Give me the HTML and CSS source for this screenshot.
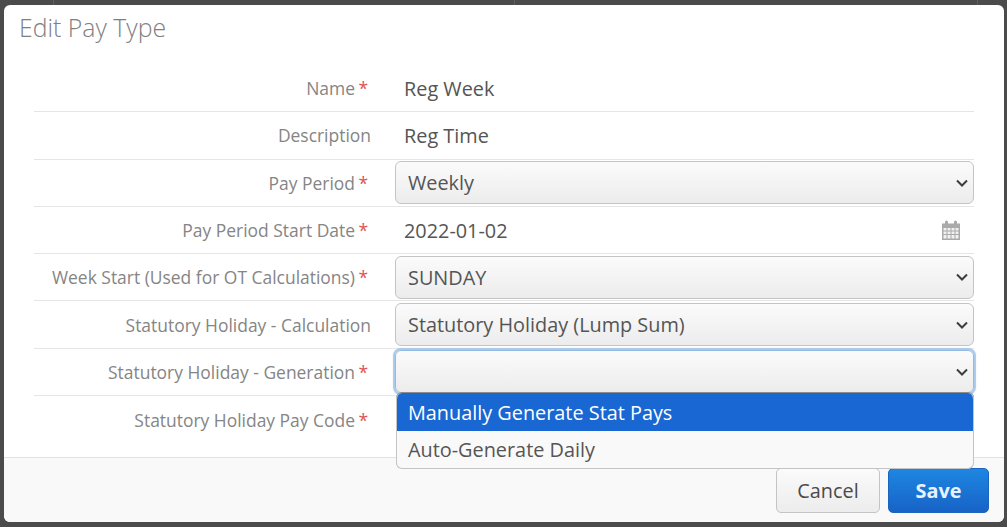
FILE: index.html
```html
<!DOCTYPE html>
<html lang="en">
<head>
    <meta charset="UTF-8">
    <title>Edit Pay Type</title>
    <link rel="stylesheet" href="styles.css">
</head>
<body>

    <div class="modal">
        <h1 class="modal-title">Edit Pay Type</h1>

        <div class="modal-body">
            <div class="row">
                <div class="label">Name<span class="req">*</span></div>
                <div class="value">Reg Week</div>
            </div>
            <div class="row">
                <div class="label">Description</div>
                <div class="value">Reg Time</div>
            </div>
            <div class="row">
                <div class="label">Pay Period<span class="req">*</span></div>
                <div class="select">Weekly
                    <svg class="chevron" viewBox="0 0 12 8"><path d="M1 1.5l5 5 5-5" /></svg>
                </div>
            </div>
            <div class="row">
                <div class="label">Pay Period Start Date<span class="req">*</span></div>
                <div class="value date">2022-01-02
                    <svg class="calendar" viewBox="0 0 20 20">
                        <path d="M1 3.5h3V2a1.5 1.5 0 0 1 3 0v1.500h6V2a1.500 1.500 0 0 1 3 0v1.500h3V20H1z" fill="#aaa" />
                        <path d="M2.500 8h3v2.500h-3zM6.500 8h3v2.500h-3zM10.500 8h3v2.500h-3zM14.500 8h3v2.500h-3zM2.500 11.500h3V14h-3zM6.500 11.500h3V14h-3zM10.500 11.500h3V14h-3zM14.500 11.500h3V14h-3zM2.500 15h3v3.500h-3zM6.500 15h3v3.500h-3zM10.500 15h3v3.500h-3zM14.500 15h3v3.500h-3z" fill="#f1f1f1" />
                    </svg>
                </div>
            </div>
            <div class="row">
                <div class="label">Week Start (Used for OT Calculations)<span class="req">*</span></div>
                <div class="select">SUNDAY
                    <svg class="chevron" viewBox="0 0 12 8"><path d="M1 1.5l5 5 5-5" /></svg>
                </div>
            </div>
            <div class="row">
                <div class="label">Statutory Holiday - Calculation</div>
                <div class="select">Statutory Holiday (Lump Sum)
                    <svg class="chevron" viewBox="0 0 12 8"><path d="M1 1.5l5 5 5-5" /></svg>
                </div>
            </div>
            <div class="row">
                <div class="label">Statutory Holiday - Generation<span class="req">*</span></div>
                <div class="select focused">
                    <svg class="chevron" viewBox="0 0 12 8"><path d="M1 1.5l5 5 5-5" /></svg>
                    <div class="dropdown">
                        <div class="option selected">Manually Generate Stat Pays</div>
                        <div class="option">Auto-Generate Daily</div>
                    </div>
                </div>
            </div>
            <div class="row last">
                <div class="label">Statutory Holiday Pay Code<span class="req">*</span></div>
            </div>
        </div>

        <div class="modal-footer">
            <button class="btn">Cancel</button>
            <button class="btn primary">Save</button>
        </div>
    </div>

</body>
</html>
```

FILE: styles.css
```css
* {
    box-sizing: border-box;
}
html, body {
    height: 100%;
}
body {
    margin: 0;
    padding: 5px 3px 5px 4px;
    background-color: #4b4b4b;
    /* table lines showing through the backdrop */
    background-image:
        linear-gradient(#5e5e5e, #5e5e5e),
        linear-gradient(#5e5e5e, #5e5e5e),
        linear-gradient(#5e5e5e, #5e5e5e);
    background-size: 1px 5px;
    background-position: 53px 0, 514px 0, 977px 0;
    background-repeat: no-repeat;
    font-family: "Open Sans", sans-serif;
    overflow: hidden;
}
.modal {
    display: flex;
    flex-direction: column;
    height: 100%;
    background-color: #fff;
    border-radius: 6px;
}
.modal-title {
    margin: 0;
    height: 60px;
    padding: 4px 15px 0;
    font-size: 24.800px;
    line-height: 36px;
    font-weight: 300;
    color: #808080;
}
.modal-body {
    flex: 1;
    padding: 0 30px;
}
.row {
    display: grid;
    grid-template-columns: 337px 1fr;
    column-gap: 24px;
    align-items: center;
    height: 47.300px;
    border-bottom: 1px solid #e6e6e6;
}
.row.last {
    border-bottom: none;
}
.label {
    text-align: right;
    font-size: 17.450px;
    color: #858585;
    white-space: nowrap;
}
.req {
    display: inline-block;
    width: 16px;
    padding-right: 3px;
    color: #e05252;
    text-align: right;
}
.value {
    padding-left: 9px;
    font-size: 19.850px;
    color: #555;
}
.date {
    display: flex;
    justify-content: space-between;
    align-items: center;
    padding-right: 13px;
}
.calendar {
    width: 20px;
    height: 20px;
}
.select {
    position: relative;
    display: flex;
    justify-content: space-between;
    align-items: center;
    height: 43px;
    padding: 0 5px 0 12px;
    border: 1px solid #c4c4c4;
    border-radius: 6px;
    background: linear-gradient(#fbfbfb, #ececec);
    font-size: 19.850px;
    color: #555;
}
.select.focused {
    border: 1px solid #94bbe6;
    box-shadow: 0 0 1px 1.500px #a9c8ea;
    justify-content: flex-end;
}
.chevron {
    width: 12px;
    height: 8px;
    fill: none;
    stroke: #3d3d3d;
    stroke-width: 2;
}
.dropdown {
    position: absolute;
    top: 42px;
    left: 0;
    right: -1px;
    background-color: #f9f9f9;
    border: 1px solid #c4c4c4;
    border-top: none;
    border-radius: 6px;
    box-shadow: 0 -1px 0 #8c8c8c;
    overflow: hidden;
}
.option {
    height: 37.500px;
    line-height: 38px;
    padding-left: 11px;
    font-size: 19.850px;
    color: #555;
}
.option.selected {
    line-height: 40px;
    background-color: #1967d2;
    color: #fff;
}
.modal-footer {
    display: flex;
    justify-content: flex-end;
    gap: 8px;
    height: 65px;
    padding: 10px 15px 0;
    background-color: #f9f9f9;
    border-top: 1px solid #e2e2e2;
    border-radius: 0 0 6px 6px;
}
.btn {
    height: 45px;
    width: 104px;
    font-family: inherit;
    font-size: 19.850px;
    color: #4a4a4a;
    background: linear-gradient(#fbfbfb, #ececec);
    border: 1px solid #c4c4c4;
    border-radius: 5px;
}
.btn.primary {
    width: 101px;
    font-weight: 700;
    color: #e8f2fc;
    background: linear-gradient(#1e86e2, #1763c6);
    border-color: #1a66bf;
}
```
